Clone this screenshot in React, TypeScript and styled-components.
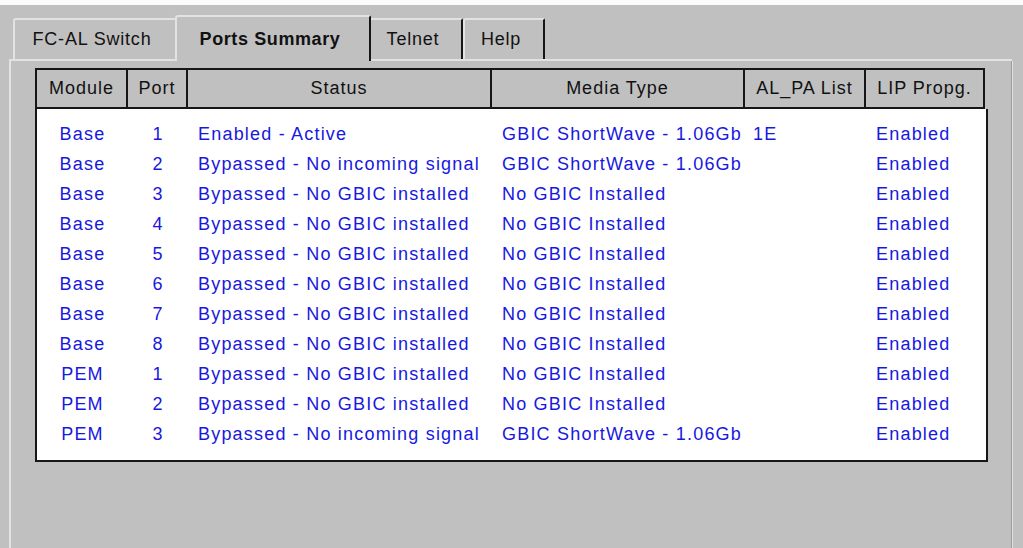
import styled, { createGlobalStyle } from "styled-components";

const GlobalStyle = createGlobalStyle`
  html, body {
    margin: 0;
    padding: 0;
    background: #c0c0c0;
  }

  body {
    font-family: "Liberation Sans", Arial, sans-serif;
    font-size: 18px;
    letter-spacing: 1px;
    color: #111;
  }
`;

interface PortRow {
  module: string;
  port: number;
  status: string;
  media: string;
  alpa: string;
  lip: string;
}

const COLUMNS = [
  { label: "Module", width: 91 },
  { label: "Port", width: 60 },
  { label: "Status", width: 304 },
  { label: "Media Type", width: 253 },
  { label: "AL_PA List", width: 121 },
  { label: "LIP Propg.", width: 119 },
];

const GRID = COLUMNS.map((c) => `${c.width}px`).join(" ");

const NO_GBIC = "Bypassed - No GBIC installed";
const NO_SIGNAL = "Bypassed - No incoming signal";
const SHORTWAVE = "GBIC ShortWave - 1.06Gb";
const NOT_INSTALLED = "No GBIC Installed";

const ROWS: PortRow[] = [
  { module: "Base", port: 1, status: "Enabled - Active", media: SHORTWAVE, alpa: "1E", lip: "Enabled" },
  { module: "Base", port: 2, status: NO_SIGNAL, media: SHORTWAVE, alpa: "", lip: "Enabled" },
  { module: "Base", port: 3, status: NO_GBIC, media: NOT_INSTALLED, alpa: "", lip: "Enabled" },
  { module: "Base", port: 4, status: NO_GBIC, media: NOT_INSTALLED, alpa: "", lip: "Enabled" },
  { module: "Base", port: 5, status: NO_GBIC, media: NOT_INSTALLED, alpa: "", lip: "Enabled" },
  { module: "Base", port: 6, status: NO_GBIC, media: NOT_INSTALLED, alpa: "", lip: "Enabled" },
  { module: "Base", port: 7, status: NO_GBIC, media: NOT_INSTALLED, alpa: "", lip: "Enabled" },
  { module: "Base", port: 8, status: NO_GBIC, media: NOT_INSTALLED, alpa: "", lip: "Enabled" },
  { module: "PEM", port: 1, status: NO_GBIC, media: NOT_INSTALLED, alpa: "", lip: "Enabled" },
  { module: "PEM", port: 2, status: NO_GBIC, media: NOT_INSTALLED, alpa: "", lip: "Enabled" },
  { module: "PEM", port: 3, status: NO_SIGNAL, media: SHORTWAVE, alpa: "", lip: "Enabled" },
];

const TABS = [
  { label: "FC-AL Switch", width: 164 },
  { label: "Ports Summary", width: 196, selected: true },
  { label: "Telnet", width: 94 },
  { label: "Help", width: 82 },
];

const App = () => {
  return (
    <>
      <GlobalStyle />
      <S.Page>
        <S.TopStrip />
        <S.Frame>
          <S.TabBar>
            {TABS.map((tab) => (
              <S.Tab key={tab.label} $width={tab.width} $selected={!!tab.selected}>
                {tab.label}
              </S.Tab>
            ))}
          </S.TabBar>

          <S.Panel>
            <S.Table>
              <S.HeaderRow>
                {COLUMNS.map((col) => (
                  <S.HeadCell key={col.label}>{col.label}</S.HeadCell>
                ))}
              </S.HeaderRow>

              <S.Body>
                {ROWS.map((row) => (
                  <S.Row key={`${row.module}-${row.port}`}>
                    <S.Cell $center>{row.module}</S.Cell>
                    <S.Cell $center>{row.port}</S.Cell>
                    <S.Cell>{row.status}</S.Cell>
                    <S.Cell>{row.media}</S.Cell>
                    <S.Cell $tight>{row.alpa}</S.Cell>
                    <S.Cell>{row.lip}</S.Cell>
                  </S.Row>
                ))}
              </S.Body>
            </S.Table>
          </S.Panel>
        </S.Frame>
      </S.Page>
    </>
  );
};

const S = {
  Page: styled.div`
    display: flex;
    flex-direction: column;

    width: 1023px;
    height: 548px;
    overflow: hidden;

    background: #c0c0c0;
  `,

  TopStrip: styled.div`
    height: 5px;
    background: #fbfbfb;
  `,

  Frame: styled.div`
    display: flex;
    flex-direction: column;
    flex: 1;

    width: 1003px;
    margin-left: 9px;
  `,

  TabBar: styled.div`
    display: flex;
    align-items: flex-end;

    height: 54px;
    padding-left: 4px;
    border-bottom: 2px solid #e2e2e2;
  `,

  Tab: styled.div<{ $width: number; $selected: boolean }>`
    position: relative;
    z-index: ${({ $selected }) => ($selected ? 2 : 1)};

    display: flex;
    align-items: center;
    justify-content: center;

    box-sizing: border-box;
    width: ${({ $width }) => $width}px;
    height: ${({ $selected }) => ($selected ? 46 : 41)}px;
    margin: 0 ${({ $selected }) => ($selected ? -2 : 0)}px
      ${({ $selected }) => ($selected ? -2 : 0)}px;
    padding-right: 6px;

    background: #c0c0c0;
    border-top: 2px solid #e2e2e2;
    border-left: 2px solid #e2e2e2;
    border-right: 2px solid #161616;
    border-top-left-radius: 3px;
    border-top-right-radius: 2px;

    font-weight: ${({ $selected }) => ($selected ? 700 : 400)};
    letter-spacing: ${({ $selected }) => ($selected ? 0.6 : 0.8)}px;
    color: #111;
    white-space: nowrap;
  `,

  Panel: styled.div`
    flex: 1;

    padding: 7px 0 0 24px;
    border-left: 2px solid #e2e2e2;
    border-right: 1px solid #9c9c9c;
    box-shadow: 1px 0 0 #e2e2e2;
  `,

  Table: styled.div`
    display: flex;
    flex-direction: column;

    width: 953px;
  `,

  HeaderRow: styled.div`
    display: grid;
    grid-template-columns: ${GRID};

    width: max-content;
    border-top: 2px solid #161616;
    border-left: 2px solid #161616;
  `,

  HeadCell: styled.div`
    height: 37px;
    line-height: 37px;
    text-align: center;

    border-right: 2px solid #161616;
    border-bottom: 2px solid #161616;

    color: #111;
    white-space: nowrap;
  `,

  Body: styled.div`
    display: flex;
    flex-direction: column;

    height: 341px;
    padding-top: 10px;

    background: #ffffff;
    border-left: 2px solid #161616;
    border-right: 2px solid #161616;
    border-bottom: 2px solid #161616;
  `,

  Row: styled.div`
    display: grid;
    grid-template-columns: ${GRID};

    height: 30px;
  `,

  Cell: styled.div<{ $center?: boolean; $tight?: boolean }>`
    padding-left: ${({ $center, $tight }) => ($center ? 0 : $tight ? 8 : 10)}px;
    line-height: 30px;
    text-align: ${({ $center }) => ($center ? "center" : "left")};

    color: #1818e0;
    letter-spacing: 1.2px;
    white-space: nowrap;
  `,
};

export default App;
